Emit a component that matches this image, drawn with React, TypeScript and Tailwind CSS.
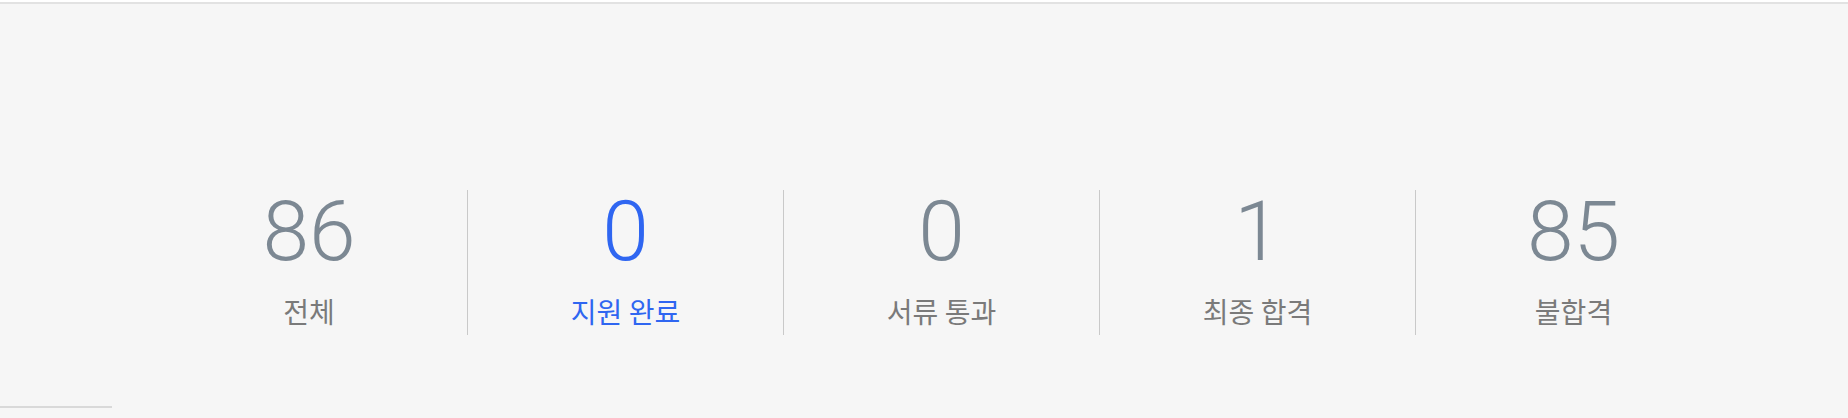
import React from 'react';

interface Stat {
  label: string;
  value: number;
  active?: boolean;
}

const stats: Stat[] = [
  { label: '전체', value: 86 },
  { label: '지원 완료', value: 0, active: true },
  { label: '서류 통과', value: 0 },
  { label: '최종 합격', value: 1 },
  { label: '불합격', value: 85 },
];

const App: React.FC = () => {
  return (
    <div className="h-[418px] w-full bg-white pt-[2px] overflow-hidden">
      <div className="h-[416px] border-t-2 border-[#e2e2e2] bg-[#f6f6f6] flex flex-col">
        {/* summary counts */}
        <div className="pt-[186px] pl-[151px] flex">
          {stats.map((s, i) => (
            <div
              key={s.label}
              className={`w-[316px] h-[145px] flex flex-col items-center ${i > 0 ? 'border-l border-[#c9c9c9]' : ''}`}
            >
              <span
                className={`text-[84px] leading-none font-light ${s.active ? 'text-[#2f66f1]' : 'text-[#7c8893]'}`}
                style={{ fontFamily: 'Roboto, "Noto Sans CJK KR", sans-serif' }}
              >
                {s.value}
              </span>
              <span
                className={`mt-[23px] text-[28px] leading-none ${s.active ? 'text-[#2f66f1]' : 'text-[#7a7a7a]'}`}
                style={{ fontFamily: '"Noto Sans CJK KR", sans-serif' }}
              >
                {s.label}
              </span>
            </div>
          ))}
        </div>

        <div className="mt-[71px] h-[2px] w-[112px] bg-[#d9d9d9]" />
      </div>
    </div>
  );
};

export default App;
